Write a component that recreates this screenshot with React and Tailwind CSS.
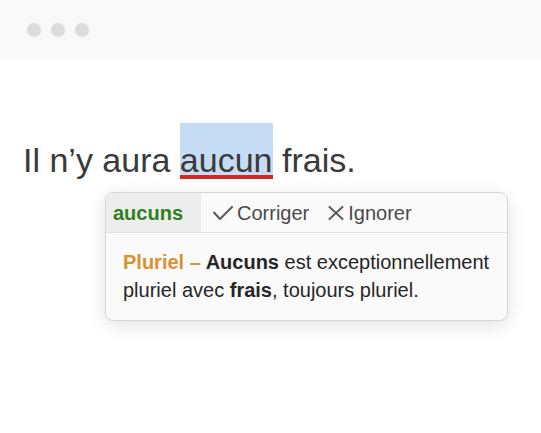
import React from 'react';

const font = { fontFamily: '"Liberation Sans", Arial, sans-serif' };

function CheckIcon() {
  return (
    <svg width="20" height="14" viewBox="0 0 20 14" fill="none">
      <path d="M1 6.5 L7 13 L19 1" stroke="#5c5c5c" strokeWidth="2" strokeLinecap="round" strokeLinejoin="round" />
    </svg>
  );
}

function XIcon() {
  return (
    <svg width="16" height="14" viewBox="0 0 16 14" fill="none">
      <path d="M1.5 1 L14.5 13 M14.5 1 L1.5 13" stroke="#5c5c5c" strokeWidth="2" strokeLinecap="round" />
    </svg>
  );
}

export default function App() {
  return (
    <div className="min-h-[433px] bg-white" style={font}>
      {/* window bar */}
      <div className="h-[59px] bg-[#f9f9f9] flex items-center pl-[27px] gap-[10px]">
        <span className="w-[14px] h-[14px] rounded-full bg-[#dcdcdc]"></span>
        <span className="w-[14px] h-[14px] rounded-full bg-[#dcdcdc]"></span>
        <span className="w-[14px] h-[14px] rounded-full bg-[#dcdcdc]"></span>
      </div>

      {/* sentence */}
      <p className="mt-[64px] pl-[23px] text-[34px] leading-[30px] text-[#3a3a3a]">
        Il n’y aura{' '}
        <span className="inline-block bg-[#c6dcf5] pt-[22px] border-b-4 border-[#d0291f]">aucun</span>{' '}
        frais.
      </p>

      {/* suggestion popup */}
      <div className="mt-[13px] ml-[105px] w-[403px] bg-[#fafafa] border border-[#d6d6d6] rounded-[8px] shadow-[0_4px_18px_rgba(0,0,0,0.12)] overflow-hidden">
        <div className="h-[40px] flex items-center border-b border-[#e2e2e2] text-[20px] text-[#4a4a4a]">
          <div className="w-[95px] h-full bg-[#ededed] flex items-center pl-[7px] font-bold text-[#2f7f1f]">
            aucuns
          </div>
          <div className="ml-[12px] flex items-center gap-[4px]">
            <CheckIcon />
            <span>Corriger</span>
          </div>
          <div className="ml-[19px] flex items-center gap-[4px]">
            <XIcon />
            <span>Ignorer</span>
          </div>
        </div>
        <div className="pl-[17px] pr-[10px] pt-[15px] pb-[16px] text-[20px] leading-[28px] text-[#262626]">
          <span className="font-bold text-[#d8922f]">Pluriel – </span>
          <strong>Aucuns</strong> est exceptionnellement pluriel avec <strong>frais</strong>, toujours pluriel.
        </div>
      </div>
    </div>
  );
}
